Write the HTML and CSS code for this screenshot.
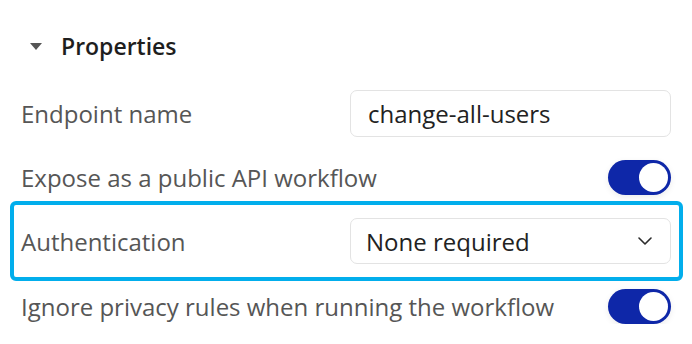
FILE: index.html
```html
<!DOCTYPE html>
<html lang="en">
<head>
    <meta charset="UTF-8">
    <meta name="viewport" content="width=device-width, initial-scale=1.0">
    <title>Properties</title>
    <link rel="stylesheet" href="styles.css">
</head>
<body>
    <div class="panel">
        <div class="section-head">
            <span class="caret"></span>
            <h2 class="section-title">Properties</h2>
        </div>

        <div class="field field-input">
            <span class="field-label">Endpoint name</span>
            <div class="text-box">change-all-users</div>
        </div>

        <div class="field field-toggle">
            <span class="field-label">Expose as a public API workflow</span>
            <div class="toggle on"><span class="knob"></span></div>
        </div>

        <div class="field field-focus">
            <span class="field-label">Authentication</span>
            <div class="select-box">
                <span>None required</span>
                <svg class="chevron" width="14" height="8" viewBox="0 0 14 8">
                    <path d="M1 1 L7 7 L13 1" fill="none" stroke="#2b2b2b" stroke-width="1.6" stroke-linecap="round" stroke-linejoin="round"/>
                </svg>
            </div>
        </div>

        <div class="field field-last">
            <span class="field-label">Ignore privacy rules when running the workflow</span>
            <div class="toggle on"><span class="knob"></span></div>
        </div>
    </div>
</body>
</html>
```

FILE: styles.css
```css
* {
    margin: 0;
    padding: 0;
    box-sizing: border-box;
}

body {
    font-family: 'Open Sans', 'Noto Sans', sans-serif;
    background: #ffffff;
    color: #555555;
}

.panel {
    display: flex;
    flex-direction: column;
    width: 673px;
    margin-left: 10px;
    padding-top: 26px;
}

.section-head {
    display: flex;
    align-items: center;
    height: 40px;
    padding-left: 20px;
}

.caret {
    width: 0;
    height: 0;
    border-left: 6px solid transparent;
    border-right: 6px solid transparent;
    border-top: 7px solid #555555;
    margin-right: 19px;
}

.section-title {
    font-size: 23px;
    font-weight: 600;
    color: #1e1e1e;
}

.field {
    display: flex;
    align-items: center;
    justify-content: space-between;
    padding: 0 12px 0 11px;
}

.field-label {
    font-size: 24px;
    color: #565656;
}

.field-input {
    height: 47px;
    margin-top: 24px;
}

.field-toggle {
    height: 35px;
    margin-top: 23px;
}

.field-focus {
    height: 80px;
    margin-top: 6px;
    border: 4px solid #02aeec;
    border-radius: 6px;
    padding: 0 8px 0 7px;
}

.field-last {
    height: 36px;
    margin-top: 7px;
}

.text-box,
.select-box {
    width: 321px;
    height: 47px;
    border: 1.5px solid #e3e3e3;
    border-radius: 7px;
    padding: 0 18px 0 17px;
    display: flex;
    align-items: center;
    font-size: 24px;
    color: #222222;
}

.select-box {
    height: 46px;
    padding-left: 15px;
    justify-content: space-between;
}

.chevron {
    display: block;
}

.toggle {
    position: relative;
    width: 63px;
    height: 35px;
    border-radius: 18px;
    background: #e0e0e0;
    box-shadow: 0 2px 6px rgba(0, 0, 0, 0.08);
}

.toggle.on {
    background: #0e27a8;
}

.knob {
    position: absolute;
    top: 3px;
    right: 3px;
    width: 29px;
    height: 29px;
    border-radius: 50%;
    background: #ffffff;
}
```
